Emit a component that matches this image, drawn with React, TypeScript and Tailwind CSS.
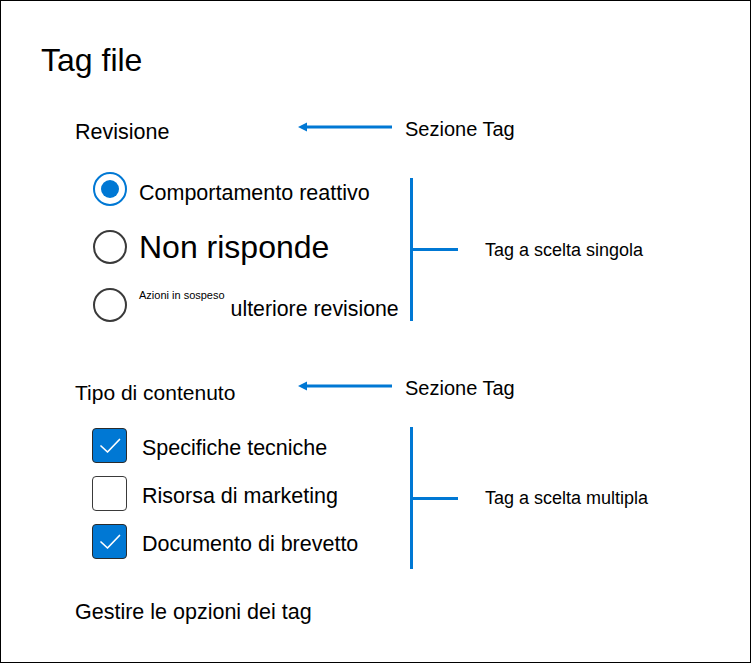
import React from 'react';

const BLUE = '#0078d4';

const Arrow: React.FC<{ className: string }> = ({ className }) => (
  <svg className={className} width="94" height="12" viewBox="0 0 94 12">
    <line x1="7" y1="6" x2="94" y2="6" stroke={BLUE} strokeWidth="3" />
    <polygon points="0,6 9,1.5 9,10.5" fill={BLUE} />
  </svg>
);

const CheckMark = () => (
  <svg width="32" height="32" viewBox="0 0 32 32" className="block">
    <path d="M7 17 L13.5 23 L25.5 10.5" fill="none" stroke="#fff" strokeWidth="1.7" strokeLinecap="round" strokeLinejoin="round" />
  </svg>
);

const Radio: React.FC<{ checked?: boolean }> = ({ checked }) =>
  checked ? (
    <div className="ml-[1px] w-[34px] h-[34px] rounded-full border-2 border-[#0078d4] flex items-center justify-center shrink-0">
      <div className="w-[18px] h-[18px] rounded-full bg-[#0078d4]" />
    </div>
  ) : (
    <div className="ml-[1px] w-[34px] h-[34px] rounded-full border-2 border-[#3a3a3a] shrink-0" />
  );

const Checkbox: React.FC<{ checked?: boolean }> = ({ checked }) =>
  checked ? (
    <div className="w-[35px] h-[35px] rounded-[4px] border-[1.5px] border-[#2b2b2b] bg-[#0078d4] flex items-center justify-center shrink-0">
      <CheckMark />
    </div>
  ) : (
    <div className="w-[35px] h-[35px] rounded-[4px] border-[1.5px] border-[#3a3a3a] bg-white shrink-0" />
  );

// bracket with a branch to the right, and the annotation text next to it
const Bracket: React.FC<{ className: string; label: string }> = ({ className, label }) => (
  <div className={`flex items-center ${className}`}>
    <div className="h-full w-[48px] border-l-[3px] border-[#0078d4] flex items-center">
      <div className="h-[3px] w-full bg-[#0078d4]" />
    </div>
    <span className="ml-[27px] text-[18px] leading-[24px] whitespace-nowrap">{label}</span>
  </div>
);

export default function App() {
  return (
    <div className="w-[751px] h-[663px] border border-black bg-white text-black font-['Liberation_Sans',Arial,sans-serif]">
      <h1 className="pl-[40px] pt-[39px] text-[32px] leading-[40px] font-normal">Tag file</h1>

      {/* Revisione */}
      <div className="mt-[37px] h-[30px] pl-[74px] flex items-start">
        <div className="w-[223px] text-[21.5px] leading-[30px]">Revisione</div>
        <Arrow className="mt-[4px]" />
        <span className="ml-[13px] -mt-[3px] text-[20px] leading-[30px]">Sezione Tag</span>
      </div>

      <div className="mt-[13px] pl-[91px] flex items-start">
        <div className="w-[318px] flex flex-col">
          <div className="h-[58px] flex items-center">
            <Radio checked />
            <span className="ml-[12px] pt-[7px] text-[21.5px] leading-[30px] whitespace-nowrap">Comportamento reattivo</span>
          </div>
          <div className="h-[58px] flex items-center">
            <Radio />
            <span className="ml-[12px] text-[32px] leading-[40px] whitespace-nowrap">Non risponde</span>
          </div>
          <div className="h-[58px] flex items-center">
            <Radio />
            <div className="ml-[12px] h-full flex items-start whitespace-nowrap">
              <span className="mt-[13px] text-[11px] leading-[13px]">Azioni in sospeso</span>
              <span className="ml-[6px] mt-[21px] text-[21.3px] leading-[24px]">ulteriore revisione</span>
            </div>
          </div>
        </div>
        <Bracket className="mt-[18px] h-[143px]" label="Tag a scelta singola" />
      </div>

      {/* Tipo di contenuto */}
      <div className="mt-[44px] h-[30px] pl-[74px] flex items-start">
        <div className="w-[223px] text-[21px] leading-[30px]">Tipo di contenuto</div>
        <Arrow className="mt-[2px]" />
        <span className="ml-[13px] -mt-[5px] text-[20px] leading-[30px]">Sezione Tag</span>
      </div>

      <div className="mt-[13px] pl-[91px] flex items-start">
        <div className="w-[318px] flex flex-col">
          <div className="h-[48px] flex items-center">
            <Checkbox checked />
            <span className="ml-[15px] pt-[6px] text-[21.5px] leading-[30px] whitespace-nowrap">Specifiche tecniche</span>
          </div>
          <div className="h-[48px] flex items-center">
            <Checkbox />
            <span className="ml-[15px] pt-[6px] text-[21.5px] leading-[30px] whitespace-nowrap">Risorsa di marketing</span>
          </div>
          <div className="h-[48px] flex items-center">
            <Checkbox checked />
            <span className="ml-[15px] pt-[6px] text-[21.5px] leading-[30px] whitespace-nowrap">Documento di brevetto</span>
          </div>
        </div>
        <Bracket className="mt-[6px] h-[142px]" label="Tag a scelta multipla" />
      </div>

      <div className="mt-[28px] h-[30px] pl-[74px] text-[21.5px] leading-[30px]">Gestire le opzioni dei tag</div>
    </div>
  );
}
